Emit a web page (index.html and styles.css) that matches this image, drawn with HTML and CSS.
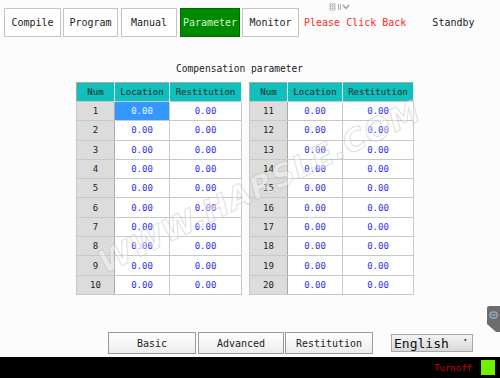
FILE: index.html
```html
<!DOCTYPE html>
<html lang="en">

<head>
    <meta charset="UTF-8">
    <meta name="viewport" content="width=device-width, initial-scale=1.0">
    <title>Parameter</title>
    <link rel="stylesheet" href="styles.css">
</head>

<body>
    <div class="screen">
        <div class="topbar">
            <div class="tab tab-compile">Compile</div>
            <div class="tab tab-program">Program</div>
            <div class="tab tab-manual">Manual</div>
            <div class="tab tab-param active">Parameter</div>
            <div class="tab tab-monitor">Monitor</div>
            <span class="back">Please Click Back</span>
            <span class="state">Standby</span>
        </div>

        <svg class="grip" width="22" height="9" viewBox="0 0 22 9">
            <rect x="0" y="0" width="7" height="8" fill="#ddd" />
            <g fill="#aaa">
                <rect x="1" y="1" width="1" height="1" /><rect x="3" y="1" width="1" height="1" /><rect x="5" y="1" width="1" height="1" />
                <rect x="1" y="3" width="1" height="1" /><rect x="3" y="3" width="1" height="1" /><rect x="5" y="3" width="1" height="1" />
                <rect x="1" y="5" width="1" height="1" /><rect x="3" y="5" width="1" height="1" /><rect x="5" y="5" width="1" height="1" />
                <rect x="9" y="1" width="1" height="6" /><rect x="11" y="1" width="1" height="6" />
            </g>
            <path d="M14 2 L17 5.5 L20 2" fill="none" stroke="#999" stroke-width="1.2" />
        </svg>

        <div class="title">Compensation parameter</div>

        <div class="tables">
            <table class="grid grid-left">
                <tr><th class="c-num">Num</th><th class="c-loc">Location</th><th class="c-res">Restitution</th></tr>
                <tr><td class="num">1</td><td class="val selected">0.00</td><td class="val">0.00</td></tr>
                <tr><td class="num">2</td><td class="val">0.00</td><td class="val">0.00</td></tr>
                <tr><td class="num">3</td><td class="val">0.00</td><td class="val">0.00</td></tr>
                <tr><td class="num">4</td><td class="val">0.00</td><td class="val">0.00</td></tr>
                <tr><td class="num">5</td><td class="val">0.00</td><td class="val">0.00</td></tr>
                <tr><td class="num">6</td><td class="val">0.00</td><td class="val">0.00</td></tr>
                <tr><td class="num">7</td><td class="val">0.00</td><td class="val">0.00</td></tr>
                <tr><td class="num">8</td><td class="val">0.00</td><td class="val">0.00</td></tr>
                <tr><td class="num">9</td><td class="val">0.00</td><td class="val">0.00</td></tr>
                <tr><td class="num">10</td><td class="val">0.00</td><td class="val">0.00</td></tr>
            </table>

            <table class="grid grid-right">
                <tr><th class="c-num">Num</th><th class="c-loc">Location</th><th class="c-res">Restitution</th></tr>
                <tr><td class="num">11</td><td class="val">0.00</td><td class="val">0.00</td></tr>
                <tr><td class="num">12</td><td class="val">0.00</td><td class="val">0.00</td></tr>
                <tr><td class="num">13</td><td class="val">0.00</td><td class="val">0.00</td></tr>
                <tr><td class="num">14</td><td class="val">0.00</td><td class="val">0.00</td></tr>
                <tr><td class="num">15</td><td class="val">0.00</td><td class="val">0.00</td></tr>
                <tr><td class="num">16</td><td class="val">0.00</td><td class="val">0.00</td></tr>
                <tr><td class="num">17</td><td class="val">0.00</td><td class="val">0.00</td></tr>
                <tr><td class="num">18</td><td class="val">0.00</td><td class="val">0.00</td></tr>
                <tr><td class="num">19</td><td class="val">0.00</td><td class="val">0.00</td></tr>
                <tr><td class="num">20</td><td class="val">0.00</td><td class="val">0.00</td></tr>
            </table>
        </div>

        <div class="watermark">WWW.HARSLE.COM</div>

        <svg class="side-tab" width="15" height="26" viewBox="0 0 15 26">
            <path d="M4 0 H15 V26 L11 26 L2 18 V2 Q2 0 4 0 Z" fill="#6d6d6d" />
            <rect x="5" y="6" width="7" height="6" rx="2" fill="none" stroke="#9cc8ff" stroke-width="1" />
            <path d="M6.5 9 H10.5" stroke="#9cc8ff" stroke-width="1" />
        </svg>

        <div class="footer">
            <button class="btn btn-basic">Basic</button>
            <button class="btn btn-adv">Advanced</button>
            <button class="btn btn-res">Restitution</button>
            <div class="lang">English<span class="arrow">&#9662;</span></div>
        </div>

        <div class="status">
            <span class="turnoff">Turnoff</span>
            <span class="lamp"></span>
        </div>
    </div>
</body>

</html>
```

FILE: styles.css
```css
body {
    margin: 0;
    font-family: "DejaVu Sans Mono", "Liberation Mono", monospace;
    background: #fff;
}

.screen {
    position: relative;
    width: 500px;
    height: 378px;
    overflow: hidden;
    background: #fcfcfc;
    display: flex;
    flex-direction: column;
}

/* top tabs */
.topbar {
    display: flex;
    align-items: center;
    height: 29px;
    margin-top: 8px;
    padding-left: 4px;
}

.tab {
    box-sizing: border-box;
    height: 29px;
    border: 1px solid #c4c4c4;
    background: #fff;
    color: #222;
    font-size: 10px;
    display: flex;
    align-items: center;
    justify-content: center;
    margin-right: 2px;
}

.tab-compile { width: 57px; }
.tab-program { width: 55px; margin-right: 3px; }
.tab-manual { width: 56px; margin-right: 3px; }
.tab-param { width: 60px; }
.tab-monitor { width: 57px; }

.tab.active {
    background: #008a00;
    border-color: #006a00;
    color: #d6f7cc;
}

.back {
    margin-left: 3px;
    color: #ff2a2a;
    font-size: 10px;
}

.state {
    margin-left: 26px;
    color: #222;
    font-size: 10px;
}

.grip {
    position: absolute;
    left: 329px;
    top: 3px;
}

.title {
    margin-top: 26px;
    padding-left: 176px;
    font-size: 9.6px;
    color: #222;
    height: 12px;
    line-height: 12px;
}

/* tables */
.tables {
    display: flex;
    gap: 7px;
    margin-top: 7px;
    padding-left: 76px;
}

.grid {
    border-collapse: collapse;
    table-layout: fixed;
    border: 1px solid #a9a9a9;
    font-size: 9px;
}

.grid-left { width: 166px; }
.grid-right { width: 165px; }

.c-num { width: 37px; }
.c-loc { width: 54px; }

.grid th {
    height: 18px;
    padding: 0;
    background: #10c0bc;
    color: #1a2a2a;
    font-weight: normal;
    border-right: 1px solid #d8f0f0;
    text-align: center;
}

.grid td {
    height: 18.3px;
    padding: 0;
    text-align: center;
    border: 1px solid #c8c8c8;
    background: #fff;
}

.grid td.num {
    background: #dcdcdc;
    color: #222;
    border-right-color: #a9a9a9;
}

.grid td.val {
    color: #3030f0;
}

.grid td.selected {
    background: #3498ff;
    color: #e6f2ff;
}

/* watermark */
.watermark {
    position: absolute;
    left: 100px;
    top: 246px;
    font-family: "DejaVu Sans", sans-serif;
    font-size: 31px;
    font-weight: bold;
    font-style: italic;
    letter-spacing: 1px;
    color: rgba(255, 255, 255, 0.4);
    -webkit-text-stroke: 1px rgba(180, 180, 180, 0.45);
    transform: rotate(-26deg);
    transform-origin: left center;
    white-space: nowrap;
    pointer-events: none;
}

.side-tab {
    position: absolute;
    left: 485px;
    top: 306px;
}

/* footer */
.footer {
    display: flex;
    align-items: center;
    margin-top: auto;
    padding-left: 108px;
    height: 22px;
    margin-bottom: 3px;
}

.btn {
    box-sizing: border-box;
    height: 22px;
    padding: 0;
    border: 1px solid #9a9a9a;
    background: linear-gradient(#ffffff, #ececec);
    color: #222;
    font-family: "DejaVu Sans Mono", monospace;
    font-size: 10px;
    margin-right: 2px;
}

.btn-basic { width: 88px; }
.btn-adv { width: 86px; margin-right: 1px; }
.btn-res { width: 88px; margin-right: 18px; }

.lang {
    box-sizing: border-box;
    width: 82px;
    height: 18px;
    border: 1px solid #a8a8a8;
    background: linear-gradient(#f4f4f4, #d8d8d8);
    font-size: 13px;
    color: #111;
    display: flex;
    align-items: center;
    padding-left: 2px;
    position: relative;
}

.arrow {
    position: absolute;
    right: 5px;
    top: 1px;
    font-size: 6px;
}

/* status bar */
.status {
    height: 21px;
    background: #000;
    display: flex;
    align-items: center;
    justify-content: flex-end;
    padding-right: 5px;
}

.turnoff {
    color: #d00000;
    font-size: 9px;
    margin-right: 9px;
}

.lamp {
    width: 14px;
    height: 15px;
    background: #6ff000;
}
```
